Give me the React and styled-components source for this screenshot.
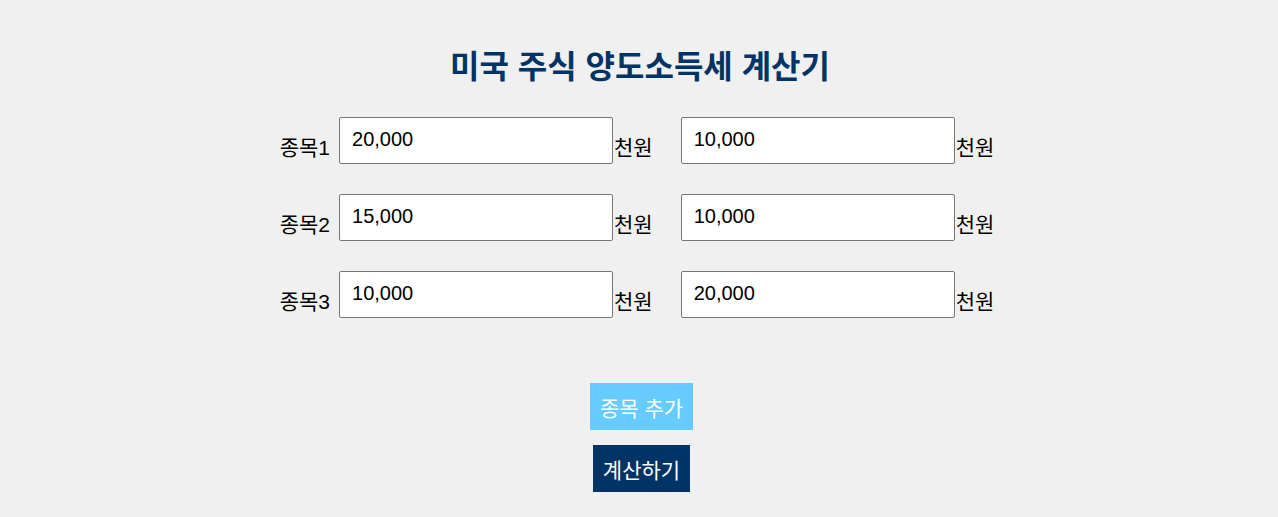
import styled, { createGlobalStyle } from 'styled-components';

const GlobalStyle = createGlobalStyle`
  body {
    margin: 0;
    background-color: #f0f0f0;
    font-family: "Liberation Sans", "Noto Sans CJK KR", sans-serif;
  }
`;

const rows = [
  { name: '종목1', buy: '20,000', sell: '10,000' },
  { name: '종목2', buy: '15,000', sell: '10,000' },
  { name: '종목3', buy: '10,000', sell: '20,000' },
];

const App = () => {
  return (
    <>
      <GlobalStyle />
      <Container>
        <Title>미국 주식 양도소득세 계산기</Title>
        <Rows>
          {rows.map((row) => (
            <Row key={row.name}>
              <Label>{row.name}</Label>
              <Field>
                <Input defaultValue={row.buy} />
                <Unit>천원</Unit>
              </Field>
              <Field>
                <Input defaultValue={row.sell} />
                <Unit>천원</Unit>
              </Field>
            </Row>
          ))}
        </Rows>
        <Buttons>
          <Button type="button" $variant="add">종목 추가</Button>
          <Button type="button" $variant="calc">계산하기</Button>
        </Buttons>
      </Container>
    </>
  );
};

export default App;

const Container = styled.div`
  display: flex;
  flex-direction: column;
  align-items: center;
  padding-top: 46px;
  padding-right: 4px;
`;

const Title = styled.h1`
  margin: 0 0 29px 6px;
  font-size: 32px;
  line-height: 42px;
  font-weight: bold;
  color: #003366;
`;

const Rows = styled.div`
  display: flex;
  flex-direction: column;
  gap: 30px;
`;

const Row = styled.div`
  display: flex;
  align-items: flex-end;
`;

const Label = styled.span`
  margin-right: 9px;
  margin-bottom: 4px;
  font-size: 21px;
  line-height: 24px;
  color: #000;
`;

const Field = styled.div`
  display: flex;
  align-items: flex-end;
  & + & {
    margin-left: 28px;
  }
`;

const Input = styled.input`
  box-sizing: border-box;
  width: 274px;
  height: 47px;
  padding: 0 12px 3px;
  border: 1px solid #767676;
  border-radius: 2px;
  background: #fff;
  font-family: "Liberation Sans", "Noto Sans CJK KR", sans-serif;
  font-size: 20px;
  color: #000;
  outline: none;
`;

const Unit = styled.span`
  margin-left: 1px;
  margin-bottom: 4px;
  font-size: 21px;
  line-height: 24px;
  color: #000;
`;

const Buttons = styled.div`
  display: flex;
  flex-direction: column;
  align-items: center;
  gap: 15px;
  margin-top: 65px;
  margin-left: 9px;
`;

const Button = styled.button`
  box-sizing: border-box;
  height: 47px;
  padding: 0 10px;
  border: none;
  font-family: "Liberation Sans", "Noto Sans CJK KR", sans-serif;
  font-size: 21px;
  color: #fff;
  cursor: pointer;
  background-color: ${({ $variant }) => ($variant === 'add' ? '#66ccff' : '#003366')};
`;
